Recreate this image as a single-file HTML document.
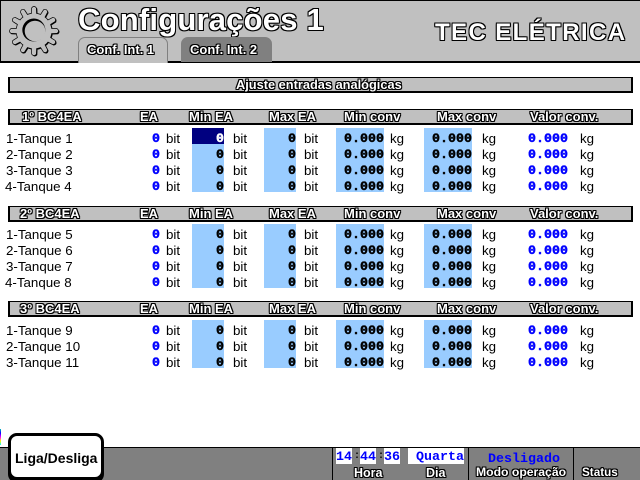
<!DOCTYPE html>
<html>
<head>
<meta charset="utf-8">
<style>
html,body{margin:0;padding:0;background:#fff}
body{width:640px;height:480px;position:relative;overflow:hidden;font-family:"Liberation Sans",sans-serif;color:#000}
div,span,b,i{position:absolute;white-space:nowrap}
.o{font-weight:bold;color:#fff;text-shadow:1px 0 #000,-1px 0 #000,0 1px #000,0 -1px #000,1px 1px #000,-1px -1px #000,1px -1px #000,-1px 1px #000}
.bar{left:8px;width:621px;height:13px;background:#c0c0c0;border:1px solid #000;border-width:1px 2px 2px 2px}
.bar span{font-size:13px;line-height:15px;top:-1px}
.r{left:0;width:640px;height:16px}
.r b,.r i,.r span{font-style:normal;top:3px;line-height:16px}
.n,.u{font-size:13.33px;font-weight:normal}
.n{left:6px}
.m{font-family:"Liberation Mono",monospace;font-weight:bold;font-size:13.33px;color:#0000ff;-webkit-text-stroke:.4px #0000ff}
.r b.m{top:4px}
.x{background:#99ccff;top:0!important;height:16px;line-height:24px!important;text-align:right;font-family:"Liberation Mono",monospace;font-weight:bold;font-size:13.33px;color:#000;-webkit-text-stroke:.4px currentColor;overflow:hidden}
.a{left:152px}.u1{left:166px}.b{left:192px;width:32px}.u2{left:233px}.c{left:264px;width:32px}.u3{left:304px}
.d{left:336px;width:48px}.u4{left:390px}.e{left:424px;width:48px}.u5{left:482px}.f{left:528px}.u6{left:580px}
.ck{background:#fff;color:#0000ff;font-family:"Liberation Mono",monospace;font-weight:bold;font-size:13.33px;line-height:20px;top:448px;height:16px;text-align:center;overflow:hidden}
.lb{font-size:12.5px;line-height:14px;top:466px}
.vl{top:447px;width:1px;height:33px;background:#000}
</style>
</head>
<body>
<!-- header -->
<div style="left:0;top:0;width:639px;height:60px;background:#c0c0c0;border:1px solid #000;border-width:1px 0 2px 1px"></div>
<svg style="position:absolute;left:0;top:0" width="70" height="62" viewBox="0 0 70 62">
<defs>
<g id="teeth">
<circle cx="34" cy="31" r="17.500"/>
<path id="t" d="M31 31L32 8Q34 5.500 36 8L37 31Z"/>
<use href="#t" transform="rotate(30 34 31)"/><use href="#t" transform="rotate(60 34 31)"/><use href="#t" transform="rotate(90 34 31)"/>
<use href="#t" transform="rotate(120 34 31)"/><use href="#t" transform="rotate(150 34 31)"/><use href="#t" transform="rotate(180 34 31)"/>
<use href="#t" transform="rotate(210 34 31)"/><use href="#t" transform="rotate(240 34 31)"/><use href="#t" transform="rotate(270 34 31)"/>
<use href="#t" transform="rotate(300 34 31)"/><use href="#t" transform="rotate(330 34 31)"/>
</g>
</defs>
<use href="#teeth" fill="#000" stroke="#000" stroke-width="1" transform="translate(.8 .8)"/>
<use href="#teeth" fill="#000" stroke="#000" stroke-width="1.400"/>
<use href="#teeth" fill="#c0c0c0"/>
<circle cx="33.800" cy="30" r="11.500" fill="#000"/>
<circle cx="35" cy="31" r="10.300" fill="#c0c0c0"/>
</svg>
<div class="o" style="left:78px;top:2px;font-size:31px;line-height:36px;letter-spacing:.2px">Configurações 1</div>
<div class="o" style="left:435px;top:20px;font-size:24px;line-height:26px;letter-spacing:1.400px">TEC ELÉTRICA</div>
<div style="left:78px;top:37px;width:88px;height:25px;background:#c0c0c0;border:1px solid #808080;border-bottom:0;border-radius:7px 7px 0 0"></div>
<div class="o" style="left:87px;top:43px;font-size:13px;line-height:14px">Conf. Int. 1</div>
<div style="left:181px;top:37px;width:91px;height:25px;background:#808080;border-radius:7px 7px 0 0"></div>
<div class="o" style="left:190px;top:43px;font-size:13px;line-height:14px">Conf. Int. 2</div>

<!-- title bar -->
<div class="bar" style="top:77px"><span class="o" style="left:226px;font-size:12.8px">Ajuste entradas analógicas</span></div>

<!-- section 1 -->
<div class="bar" style="top:109px"><span class="o" style="left:12px">1º BC4EA</span><span class="o" style="left:130px">EA</span><span class="o" style="left:179px">Min EA</span><span class="o" style="left:259px">Max EA</span><span class="o" style="left:334px">Min conv</span><span class="o" style="left:427px">Max conv</span><span class="o" style="left:520px">Valor conv.</span></div>
<div class="r" style="top:128px"><span class="n">1-Tanque 1</span><b class="m a">0</b><span class="u u1">bit</span><b class="x b" style="background:#000080;color:#fff">0</b><span class="u u2">bit</span><b class="x c">0</b><span class="u u3">bit</span><b class="x d">0.000</b><span class="u u4">kg</span><b class="x e">0.000</b><span class="u u5">kg</span><b class="m f">0.000</b><span class="u u6">kg</span></div>
<div class="r" style="top:144px"><span class="n">2-Tanque 2</span><b class="m a">0</b><span class="u u1">bit</span><b class="x b">0</b><span class="u u2">bit</span><b class="x c">0</b><span class="u u3">bit</span><b class="x d">0.000</b><span class="u u4">kg</span><b class="x e">0.000</b><span class="u u5">kg</span><b class="m f">0.000</b><span class="u u6">kg</span></div>
<div class="r" style="top:160px"><span class="n">3-Tanque 3</span><b class="m a">0</b><span class="u u1">bit</span><b class="x b">0</b><span class="u u2">bit</span><b class="x c">0</b><span class="u u3">bit</span><b class="x d">0.000</b><span class="u u4">kg</span><b class="x e">0.000</b><span class="u u5">kg</span><b class="m f">0.000</b><span class="u u6">kg</span></div>
<div class="r" style="top:176px"><span class="n" style="left:5px">4-Tanque 4</span><b class="m a">0</b><span class="u u1">bit</span><b class="x b">0</b><span class="u u2">bit</span><b class="x c">0</b><span class="u u3">bit</span><b class="x d">0.000</b><span class="u u4">kg</span><b class="x e">0.000</b><span class="u u5">kg</span><b class="m f">0.000</b><span class="u u6">kg</span></div>

<!-- section 2 -->
<div class="bar" style="top:206px"><span class="o" style="left:10px">2º BC4EA</span><span class="o" style="left:130px">EA</span><span class="o" style="left:179px">Min EA</span><span class="o" style="left:259px">Max EA</span><span class="o" style="left:334px">Min conv</span><span class="o" style="left:427px">Max conv</span><span class="o" style="left:520px">Valor conv.</span></div>
<div class="r" style="top:224px"><span class="n">1-Tanque 5</span><b class="m a">0</b><span class="u u1">bit</span><b class="x b">0</b><span class="u u2">bit</span><b class="x c">0</b><span class="u u3">bit</span><b class="x d">0.000</b><span class="u u4">kg</span><b class="x e">0.000</b><span class="u u5">kg</span><b class="m f">0.000</b><span class="u u6">kg</span></div>
<div class="r" style="top:240px"><span class="n">2-Tanque 6</span><b class="m a">0</b><span class="u u1">bit</span><b class="x b">0</b><span class="u u2">bit</span><b class="x c">0</b><span class="u u3">bit</span><b class="x d">0.000</b><span class="u u4">kg</span><b class="x e">0.000</b><span class="u u5">kg</span><b class="m f">0.000</b><span class="u u6">kg</span></div>
<div class="r" style="top:256px"><span class="n">3-Tanque 7</span><b class="m a">0</b><span class="u u1">bit</span><b class="x b">0</b><span class="u u2">bit</span><b class="x c">0</b><span class="u u3">bit</span><b class="x d">0.000</b><span class="u u4">kg</span><b class="x e">0.000</b><span class="u u5">kg</span><b class="m f">0.000</b><span class="u u6">kg</span></div>
<div class="r" style="top:272px"><span class="n" style="left:5px">4-Tanque 8</span><b class="m a">0</b><span class="u u1">bit</span><b class="x b">0</b><span class="u u2">bit</span><b class="x c">0</b><span class="u u3">bit</span><b class="x d">0.000</b><span class="u u4">kg</span><b class="x e">0.000</b><span class="u u5">kg</span><b class="m f">0.000</b><span class="u u6">kg</span></div>

<!-- section 3 -->
<div class="bar" style="top:301px"><span class="o" style="left:10px">3º BC4EA</span><span class="o" style="left:130px">EA</span><span class="o" style="left:179px">Min EA</span><span class="o" style="left:259px">Max EA</span><span class="o" style="left:334px">Min conv</span><span class="o" style="left:427px">Max conv</span><span class="o" style="left:520px">Valor conv.</span></div>
<div class="r" style="top:320px"><span class="n">1-Tanque 9</span><b class="m a">0</b><span class="u u1">bit</span><b class="x b">0</b><span class="u u2">bit</span><b class="x c">0</b><span class="u u3">bit</span><b class="x d">0.000</b><span class="u u4">kg</span><b class="x e">0.000</b><span class="u u5">kg</span><b class="m f">0.000</b><span class="u u6">kg</span></div>
<div class="r" style="top:336px"><span class="n">2-Tanque 10</span><b class="m a">0</b><span class="u u1">bit</span><b class="x b">0</b><span class="u u2">bit</span><b class="x c">0</b><span class="u u3">bit</span><b class="x d">0.000</b><span class="u u4">kg</span><b class="x e">0.000</b><span class="u u5">kg</span><b class="m f">0.000</b><span class="u u6">kg</span></div>
<div class="r" style="top:352px"><span class="n">3-Tanque 11</span><b class="m a">0</b><span class="u u1">bit</span><b class="x b">0</b><span class="u u2">bit</span><b class="x c">0</b><span class="u u3">bit</span><b class="x d">0.000</b><span class="u u4">kg</span><b class="x e">0.000</b><span class="u u5">kg</span><b class="m f">0.000</b><span class="u u6">kg</span></div>

<!-- footer -->
<div style="left:0;top:429px;width:1px;height:16px;background:linear-gradient(#00c0c0,#0000ff,#ff00ff,#ffff00,#00ffff)"></div>
<div style="left:0;top:447px;width:640px;height:33px;background:#808080;border-top:1px solid #000;box-sizing:border-box"></div>
<div class="vl" style="left:332px"></div>
<div class="vl" style="left:468px"></div>
<div class="vl" style="left:573px"></div>
<div style="left:8px;top:433px;width:90px;height:41px;background:#fff;border:3px solid #000;border-radius:9px;box-shadow:0 3px 0 #000"></div>
<div style="left:15px;top:450px;font-size:14px;line-height:16px;font-weight:bold">Liga/Desliga</div>
<div class="ck" style="left:336px;width:16px">14</div>
<div class="ck" style="left:360px;width:16px">44</div>
<div class="ck" style="left:384px;width:16px">36</div>
<div class="ck" style="left:408px;width:56px;text-align:right">Quarta</div>
<div style="left:354px;top:451px;font:bold 10px/12px 'Liberation Mono',monospace">:</div>
<div style="left:378px;top:451px;font:bold 10px/12px 'Liberation Mono',monospace">:</div>
<div style="left:488px;top:452px;color:#0000ff;font:bold 13.33px/16px 'Liberation Mono',monospace">Desligado</div>
<div class="o lb" style="left:354px">Hora</div>
<div class="o lb" style="left:426px">Dia</div>
<div class="o lb" style="left:476px;top:465px;font-size:12.2px">Modo operação</div>
<div class="o lb" style="left:582px;font-size:11.7px">Status</div>
</body>
</html>
